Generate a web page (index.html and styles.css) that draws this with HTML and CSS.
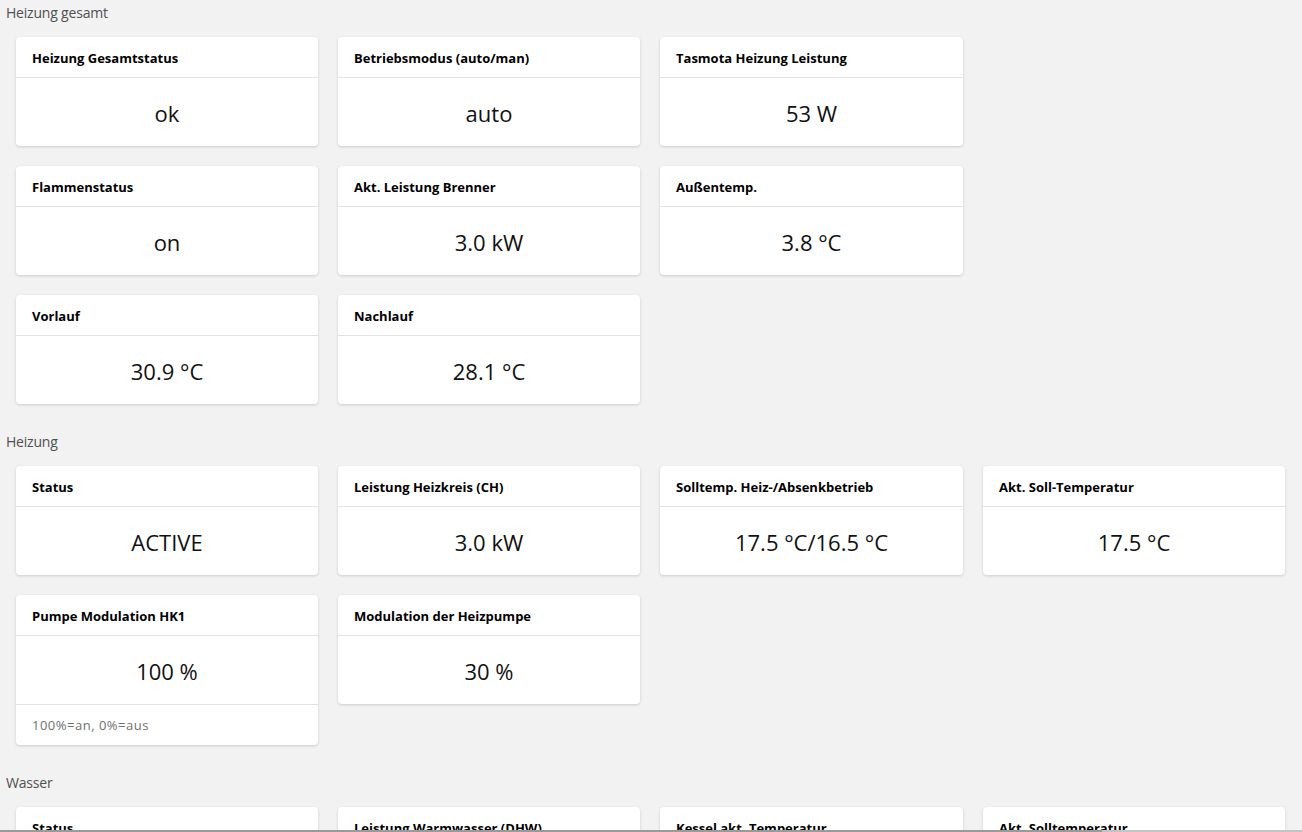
FILE: index.html
```html
<!DOCTYPE html>
<html lang="de">
<head>
<meta charset="utf-8">
<title>Heizung</title>
<link rel="stylesheet" href="styles.css">
</head>
<body>
<main class="page">
  <section class="group">
    <h2 class="group-title">Heizung gesamt</h2>
    <div class="grid">
      <div class="card"><div class="card-head">Heizung Gesamtstatus</div><div class="card-value">ok</div></div>
      <div class="card"><div class="card-head">Betriebsmodus (auto/man)</div><div class="card-value">auto</div></div>
      <div class="card"><div class="card-head">Tasmota Heizung Leistung</div><div class="card-value">53 W</div></div>
      <div class="spacer"></div>
      <div class="card"><div class="card-head">Flammenstatus</div><div class="card-value">on</div></div>
      <div class="card"><div class="card-head">Akt. Leistung Brenner</div><div class="card-value">3.0 kW</div></div>
      <div class="card"><div class="card-head">Außentemp.</div><div class="card-value">3.8 °C</div></div>
      <div class="spacer"></div>
      <div class="card"><div class="card-head">Vorlauf</div><div class="card-value">30.9 °C</div></div>
      <div class="card"><div class="card-head">Nachlauf</div><div class="card-value">28.1 °C</div></div>
    </div>
  </section>
  <section class="group">
    <h2 class="group-title">Heizung</h2>
    <div class="grid">
      <div class="card"><div class="card-head">Status</div><div class="card-value">ACTIVE</div></div>
      <div class="card"><div class="card-head">Leistung Heizkreis (CH)</div><div class="card-value">3.0 kW</div></div>
      <div class="card"><div class="card-head">Solltemp. Heiz-/Absenkbetrieb</div><div class="card-value">17.5 °C/16.5 °C</div></div>
      <div class="card"><div class="card-head">Akt. Soll-Temperatur</div><div class="card-value">17.5 °C</div></div>
      <div class="card"><div class="card-head">Pumpe Modulation HK1</div><div class="card-value">100 %</div><div class="card-foot">100%=an, 0%=aus</div></div>
      <div class="card"><div class="card-head">Modulation der Heizpumpe</div><div class="card-value">30 %</div></div>
    </div>
  </section>
  <section class="group">
    <h2 class="group-title">Wasser</h2>
    <div class="grid">
      <div class="card"><div class="card-head">Status</div><div class="card-value">&nbsp;</div></div>
      <div class="card"><div class="card-head">Leistung Warmwasser (DHW)</div><div class="card-value">&nbsp;</div></div>
      <div class="card"><div class="card-head">Kessel akt. Temperatur</div><div class="card-value">&nbsp;</div></div>
      <div class="card"><div class="card-head">Akt. Solltemperatur</div><div class="card-value">&nbsp;</div></div>
    </div>
  </section>
</main>
<div class="scrollbar"><div class="scroll-thumb"></div></div>
</body>
</html>
```

FILE: styles.css
```css
html, body {
  margin: 0;
  padding: 0;
  background: #f2f2f2;
  font-family: "Open Sans", "Noto Sans", "Liberation Sans", sans-serif;
  color: #000;
  overflow: hidden;
  height: 832px;
}

.page {
  display: flex;
  flex-direction: column;
}

.group {
  padding-bottom: 25px;
}

.group-title {
  margin: 0;
  padding: 3px 6px 0;
  height: 19px;
  line-height: 19px;
  font-size: 14px;
  font-weight: 400;
  color: #505050;
  letter-spacing: -0.2px;
}

.grid {
  display: grid;
  grid-template-columns: 302px 302px 303px 302px;
  column-gap: 20px;
  row-gap: 20px;
  align-items: start;
  margin-top: 15px;
  padding: 0 17px 0 16px;
}

.card {
  background: #fff;
  border-radius: 4px;
  box-shadow: 0 1px 3px rgba(0, 0, 0, 0.16);
  display: flex;
  flex-direction: column;
}

.card-head {
  box-sizing: border-box;
  height: 41px;
  padding: 2px 16px 0;
  border-bottom: 1px solid #e3e3e3;
  display: flex;
  align-items: center;
  font-size: 13px;
  font-weight: 700;
}

.card-value {
  box-sizing: border-box;
  height: 68px;
  padding-top: 2px;
  display: flex;
  align-items: center;
  justify-content: center;
  font-size: 22px;
  color: #111;
}

.card-foot {
  box-sizing: border-box;
  height: 41px;
  border-top: 1px solid #e3e3e3;
  padding: 0 16px;
  display: flex;
  align-items: center;
  font-size: 13px;
  letter-spacing: 0.5px;
  color: #707070;
}

.scrollbar {
  position: fixed;
  left: 0;
  right: 0;
  bottom: 0;
  height: 2px;
  background: #9a9a9a;
}

.scroll-thumb {
  position: absolute;
  right: 0;
  top: 0;
  width: 200px;
  height: 2px;
  background: #c4c4c4;
}
```
